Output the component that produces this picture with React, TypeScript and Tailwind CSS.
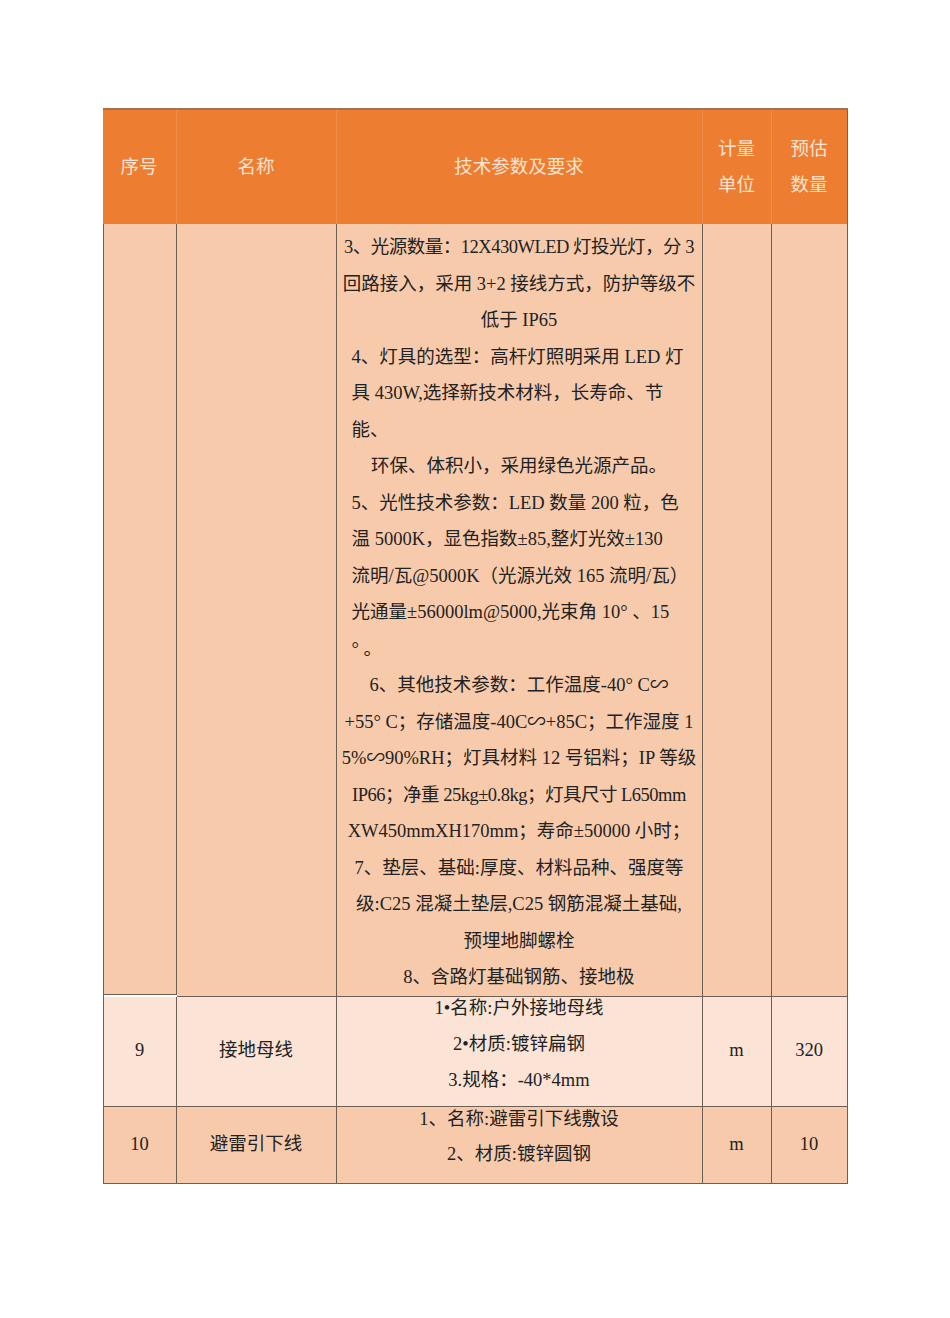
import React from 'react';

type Line = { t: string; left?: boolean; tight?: boolean };

const font = { fontFamily: "'Liberation Serif', 'Noto Sans CJK SC', serif" };

const specLines: Line[] = [
  { t: '3、光源数量：12X430WLED 灯投光灯，分 3', tight: true },
  { t: '回路接入，采用 3+2 接线方式，防护等级不' },
  { t: '低于 IP65' },
  { t: '4、灯具的选型：高杆灯照明采用 LED 灯', left: true },
  { t: '具 430W,选择新技术材料，长寿命、节', left: true },
  { t: '能、', left: true },
  { t: '环保、体积小，采用绿色光源产品。' },
  { t: '5、光性技术参数：LED 数量 200 粒，色', left: true },
  { t: '温 5000K，显色指数±85,整灯光效±130', left: true },
  { t: '流明/瓦@5000K（光源光效 165 流明/瓦）', left: true },
  { t: '光通量±56000lm@5000,光束角 10° 、15', left: true },
  { t: '°  。', left: true },
  { t: '6、其他技术参数：工作温度-40° C∽' },
  { t: '+55° C；存储温度-40C∽+85C；工作湿度 1' },
  { t: '5%∽90%RH；灯具材料 12 号铝料；IP 等级' },
  { t: 'IP66；净重 25kg±0.8kg；灯具尺寸 L650mm', tight: true },
  { t: 'XW450mmXH170mm；寿命±50000 小时；' },
  { t: '7、垫层、基础:厚度、材料品种、强度等' },
  { t: '级:C25 混凝土垫层,C25 钢筋混凝土基础,' },
  { t: '预埋地脚螺栓' },
  { t: '8、含路灯基础钢筋、接地极' },
];

const cell = 'border-r border-b border-[#6e5f55] text-[#222] text-[18.5px]';

function Head({ children, last }: { children: React.ReactNode; last?: boolean }) {
  return (
    <div
      className={`flex items-center justify-center text-center text-[18.5px] leading-[36px] text-[#fbe3d1] ${
        last ? 'border-r border-[#8a5a3a]' : 'border-r border-[#f08b48]'
      }`}
    >
      {children}
    </div>
  );
}

export default function App() {
  return (
    <div className="min-h-[1318px] bg-white pt-[108px]" style={font}>
      <div className="mx-auto w-[745px]">
        <div className="grid grid-cols-[74px_160px_366px_69px_76px] h-[116px] bg-[#ed7d31] border-t-2 border-[#a8714c]">
          <Head>序号</Head>
          <Head>名称</Head>
          <Head>技术参数及要求</Head>
          <Head>
            计量
            <br />
            单位
          </Head>
          <Head last>
            预估
            <br />
            数量
          </Head>
        </div>

        <div className="grid grid-cols-[73px_160px_366px_69px_76px] border-l border-[#6e5f55]">
          {/* continued row */}
          <div className={`${cell} h-[771px] bg-[#f7caac]`} />
          <div className={`${cell} bg-[#f7caac]`} />
          <div className={`${cell} bg-[#f7caac] pt-[5px] leading-[36.5px] whitespace-nowrap`}>
            {specLines.map((l, i) => (
              <div
                key={i}
                className={`${l.left ? 'pl-[15px] text-left' : 'text-center'} ${l.tight ? 'tracking-[-0.5px]' : ''}`}
              >
                {l.t}
              </div>
            ))}
          </div>
          <div className={`${cell} bg-[#f7caac]`} />
          <div className={`${cell} bg-[#f7caac]`} />

          {/* row 9 */}
          <div className={`${cell} h-[110px] bg-[#fbe4d5] flex items-center justify-center`}>9</div>
          <div className={`${cell} bg-[#fbe4d5] flex items-center justify-center`}>接地母线</div>
          <div className={`${cell} bg-[#fbe4d5] text-center leading-[36px]`}>
            <div className="-mt-[7px]">
              <div>1•名称:户外接地母线</div>
              <div>2•材质:镀锌扁钢</div>
              <div>3.规格：-40*4mm</div>
            </div>
          </div>
          <div className={`${cell} bg-[#fbe4d5] flex items-center justify-center`}>m</div>
          <div className={`${cell} bg-[#fbe4d5] flex items-center justify-center`}>320</div>

          {/* row 10 */}
          <div className={`${cell} h-[77px] bg-[#f7caac] flex items-center justify-center`}>10</div>
          <div className={`${cell} bg-[#f7caac] flex items-center justify-center`}>避雷引下线</div>
          <div className={`${cell} bg-[#f7caac] text-center leading-[35px]`}>
            <div className="-mt-[5px]">
              <div>1、名称:避雷引下线敷设</div>
              <div>2、材质:镀锌圆钢</div>
            </div>
          </div>
          <div className={`${cell} bg-[#f7caac] flex items-center justify-center`}>m</div>
          <div className={`${cell} bg-[#f7caac] flex items-center justify-center`}>10</div>
        </div>
      </div>
    </div>
  );
}
